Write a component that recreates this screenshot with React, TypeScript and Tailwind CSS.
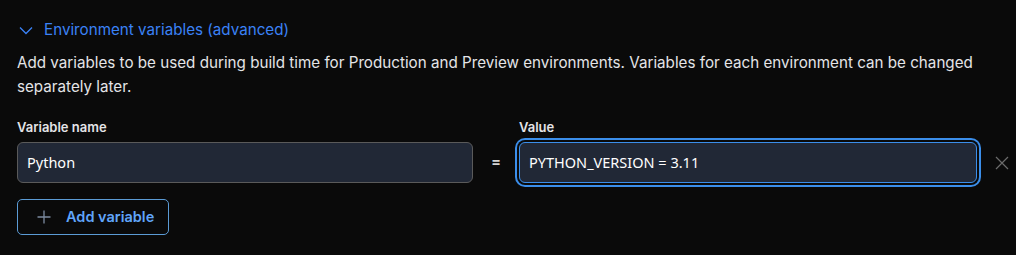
import React from "react";

const ChevronDown = () => (
  <svg width="16" height="16" viewBox="0 0 16 16" fill="none" stroke="currentColor" strokeWidth="1.3">
    <path d="M2 5.5l6 6 6-6" />
  </svg>
);

const Plus = () => (
  <svg width="16" height="16" viewBox="0 0 16 16" fill="none" stroke="currentColor" strokeWidth="1.3">
    <path d="M8 1.5v13M1.5 8h13" />
  </svg>
);

const Close = () => (
  <svg width="16" height="16" viewBox="0 0 16 16" fill="none" stroke="currentColor" strokeWidth="1.2">
    <path d="M2 2l12 12M14 2L2 14" />
  </svg>
);

export default function App() {
  return (
    <div className="w-[1016px] h-[255px] bg-[#0a0a0a] text-[#e4e4e7] font-['Inter',sans-serif] pl-[17px] pt-[19px] overflow-hidden">
      {/* Toggle */}
      <button className="flex items-center gap-[10px] text-[#3b82f6] text-[15.2px] leading-[22px] pl-[1px]">
        <ChevronDown />
        <span>Environment variables (advanced)</span>
      </button>

      <p className="mt-[10px] text-[15.2px] leading-[24px] text-[#e4e4e7] pr-[37px]">
        Add variables to be used during build time for Production and Preview environments. Variables for each environment can be changed separately later.
      </p>

      {/* Row */}
      <div className="mt-[20px] flex items-end">
        <div className="w-[456px] flex flex-col">
          <label className="text-[13px] font-semibold leading-[17px] mb-[6px] text-[#e4e4e7]">Variable name</label>
          <div className="h-[41px] rounded-[6px] border border-[#5a5a5a] bg-[#212836] flex items-center px-[9px] font-['Noto_Sans',sans-serif] text-[14.5px] text-white">
            Python
          </div>
        </div>
        <div className="w-[46px] h-[41px] flex items-center justify-center text-[15px] font-semibold text-[#d4d4d4]">=</div>
        <div className="w-[458px] flex flex-col">
          <label className="text-[13px] font-semibold leading-[17px] mb-[6px] text-[#e4e4e7]">Value</label>
          <div className="h-[41px] rounded-[6px] border border-[#3b8eea] bg-[#212836] ring-2 ring-[#3b8eea] ring-offset-2 ring-offset-[#0a0a0a] flex items-center px-[9px] font-['Noto_Sans',sans-serif] text-[14.5px] text-white">
            PYTHON_VERSION = 3.11
          </div>
        </div>
        <div className="flex-1 h-[41px] flex items-center justify-center text-[#6b6b6b] pl-[10px]">
          <Close />
        </div>
      </div>

      <button className="mt-[16px] h-[36px] w-[152px] rounded-[5px] border border-[#5b9bd5] flex items-center gap-[14px] pl-[18px] text-[#60a5fa] text-[14.5px] font-semibold">
        <span className="text-[#7c8aa0]"><Plus /></span>
        <span>Add variable</span>
      </button>
    </div>
  );
}
